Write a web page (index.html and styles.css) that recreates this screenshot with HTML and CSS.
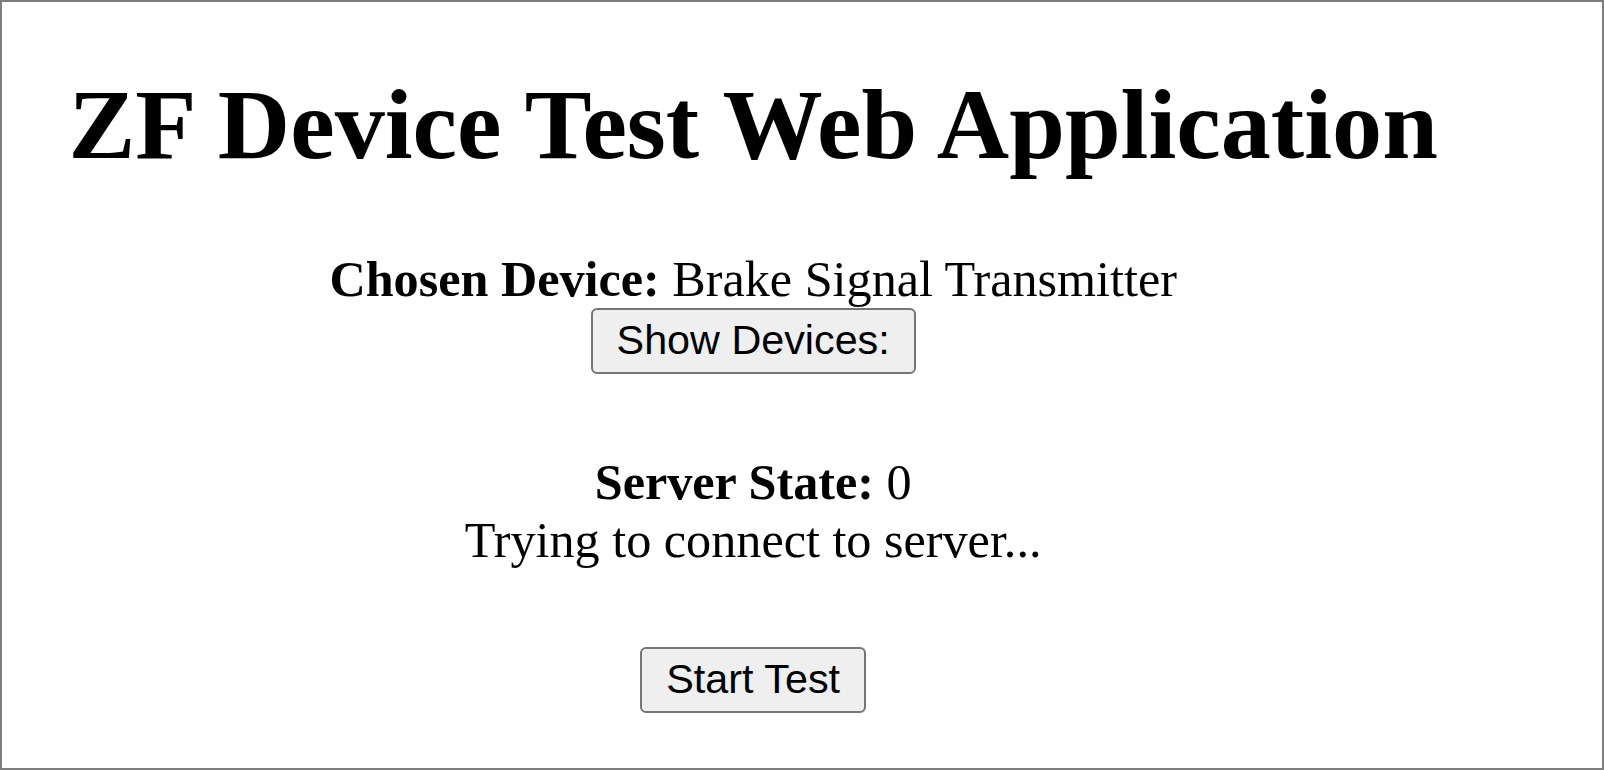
FILE: index.html
```html
<!DOCTYPE html>
<html lang="en">
<head>
<meta charset="utf-8">
<title>ZF Device Test Web Application</title>
<link rel="stylesheet" href="styles.css">
</head>
<body>
<div class="frame">
  <div class="app">
    <h1 class="title">ZF Device Test Web Application</h1>
    <div class="line device"><b>Chosen Device:</b> Brake Signal Transmitter</div>
    <button class="btn" type="button">Show Devices:</button>
    <div class="line state"><b>Server State:</b> 0</div>
    <div class="line status">Trying to connect to server...</div>
    <button class="btn btn-start" type="button">Start Test</button>
  </div>
</div>
</body>
</html>
```

FILE: styles.css
```css
html, body {
  margin: 0;
  padding: 0;
  background: #ffffff;
}

body {
  font-family: "Liberation Serif", "Times New Roman", serif;
  color: #000000;
}

.frame {
  box-sizing: border-box;
  width: 1604px;
  height: 770px;
  border: 2px solid #7f7f7f;
  padding: 65px 0 0 66.5px;
  overflow: hidden;
}

.app {
  display: flex;
  flex-direction: column;
  align-items: center;
  width: max-content;
  font-size: 50.2px;
}

.title {
  margin: 0;
  font-size: 100.2px;
  font-weight: bold;
  line-height: normal;
}

.line {
  line-height: normal;
}

.device {
  margin-top: 67.5px;
}

.btn {
  font-family: "Liberation Sans", Arial, sans-serif;
  font-size: 41.3px;
  line-height: normal;
  padding: 7.5px 24px;
  border: 2px solid #767676;
  border-radius: 6px;
  background: #efefef;
  color: #000000;
}

.state {
  margin-top: 79px;
}

.btn-start {
  margin-top: 78px;
}
```
